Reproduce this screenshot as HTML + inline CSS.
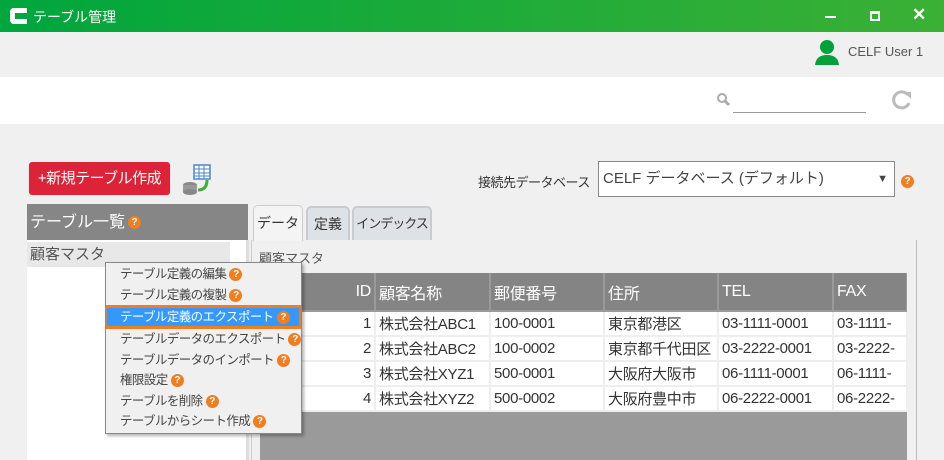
<!DOCTYPE html>
<html><head><meta charset="utf-8"><style>
*{margin:0;padding:0;box-sizing:border-box}
body{width:944px;height:460px;overflow:hidden;background:#f0f0f0;font-family:"Liberation Sans","Noto Sans CJK JP",sans-serif;position:relative;color:#333}
.a{position:absolute;white-space:nowrap}
.q{display:inline-block;width:13px;height:13px;border-radius:50%;background:#f07d1e;color:#fff;font-size:10px;font-weight:bold;text-align:center;line-height:13px;vertical-align:middle;margin-left:3px}
.menu div{height:20.5px;line-height:20px;padding-left:14px;font-size:12.5px;letter-spacing:-0.6px;color:#444;white-space:nowrap}
table{border-collapse:collapse;font-size:15px;letter-spacing:-0.3px}
td,th{height:25px;border-right:2px solid #eee;border-bottom:2px solid #eee;padding:0 3px;white-space:nowrap;overflow:hidden;font-weight:normal;text-align:left;color:#333}
th{height:38px;background:#848484;color:#fff;border-color:#9a9a9a;font-size:16px;vertical-align:middle}
</style></head><body>
<div class="a" style="left:0;top:0;width:944px;height:32px;background:linear-gradient(90deg,#00a63e,#3bb035)"></div>
<div class="a" style="left:10px;top:8px;width:17px;height:16px;border:5px solid #fff;border-right:none;border-radius:4px 0 0 4px"></div>
<div class="a" style="left:33px;top:7px;color:#fff;font-size:14px">テーブル管理</div>
<div class="a" style="left:825px;top:16px;width:11px;height:2px;background:#fff"></div>
<div class="a" style="left:870px;top:11px;width:10px;height:10px;border:2px solid #fff;border-top-width:3px"></div>
<div class="a" style="left:912px;top:5px;color:#fff;font-size:17px;font-weight:bold">✕</div>
<svg class="a" style="left:814px;top:38px" width="26" height="27"><circle cx="13" cy="9" r="7" fill="#04a03c"/><path d="M1 27 Q2 17 13 17 Q24 17 25 27Z" fill="#04a03c"/></svg>
<div class="a" style="left:848px;top:44px;font-size:13px;color:#555">CELF User 1</div>
<div class="a" style="left:0;top:77px;width:944px;height:47px;background:#fff"></div>
<svg class="a" style="left:716px;top:92px" width="16" height="16"><circle cx="6" cy="6" r="4" fill="none" stroke="#aaa" stroke-width="2"/><path d="M9 9l4 4" stroke="#aaa" stroke-width="3"/></svg>
<div class="a" style="left:733px;top:112px;width:133px;height:1px;background:#999"></div>
<svg class="a" style="left:890px;top:88px" width="24" height="24"><path d="M18 7 A8 8 0 1 0 19 15" fill="none" stroke="#bbb" stroke-width="3"/><path d="M14 4 L21 4 L21 11Z" fill="#bbb"/></svg>
<div class="a" style="left:29px;top:162px;width:141px;height:33px;background:#dc2338;border-radius:3px;color:#fff;font-size:15px;letter-spacing:-0.5px;line-height:33px;text-align:center">+新規テーブル作成</div>
<svg class="a" style="left:180px;top:164px" width="32" height="32"><rect x="14" y="1" width="16" height="14" fill="#fff" stroke="#4a86c8" stroke-width="1.5"/><path d="M14 5h16M14 9h16M14 12h16M19 1v14M24 1v14" stroke="#4a86c8"/><ellipse cx="10" cy="21" rx="7" ry="3" fill="#888"/><rect x="3" y="21" width="14" height="7" fill="#999"/><ellipse cx="10" cy="28" rx="7" ry="3" fill="#888"/><path d="M18 26 Q27 26 27 16" fill="none" stroke="#3bb035" stroke-width="3"/></svg>
<div class="a" style="left:478px;top:172px;font-size:13px;letter-spacing:-0.5px">接続先データベース</div>
<div class="a" style="left:598px;top:161px;width:297px;height:36px;background:#fff;border:1px solid #888;font-size:15px;line-height:34px;padding-left:4px;color:#444">CELF データベース (デフォルト)<span style="position:absolute;right:6px;font-size:11px">▼</span></div>
<span class="a q" style="left:898px;top:175px">?</span>
<div class="a" style="left:27px;top:204px;width:221px;height:36px;background:#868686;color:#fff;font-size:16px;line-height:38px;padding-left:3px">テーブル一覧<span class="q">?</span></div>
<div class="a" style="left:27px;top:240px;width:221px;height:220px;background:#fff"></div>
<div class="a" style="left:27px;top:242px;width:203px;height:25px;background:#e8e8e8;font-size:15px;line-height:25px;padding-left:3px;color:#555">顧客マスタ</div>
<div class="a" style="left:246px;top:240px;width:3px;height:220px;background:#ddd"></div>
<div class="a" style="left:253px;top:205px;width:50px;height:36px;background:#f4f4f4;border:1px solid #ccc;border-bottom:none;border-radius:5px 5px 0 0;font-size:14px;line-height:34px;text-align:center">データ</div>
<div class="a" style="left:306px;top:206px;width:44px;height:34px;background:#dde2e6;border:2px solid #c6ccd0;border-bottom:none;border-radius:5px 5px 0 0;font-size:14px;line-height:32px;text-align:center">定義</div>
<div class="a" style="left:352px;top:206px;width:80px;height:34px;background:#dde2e6;border:2px solid #c6ccd0;border-bottom:none;border-radius:5px 5px 0 0;font-size:13px;letter-spacing:-1px;line-height:32px;text-align:center">インデックス</div>
<div class="a" style="left:251px;top:240px;width:666px;height:220px;border-left:1px solid #ccc;border-right:1px solid #bbb"></div>
<div class="a" style="left:259px;top:248px;font-size:13px;color:#555">顧客マスタ</div>
<div class="a" style="left:260px;top:273px;width:647px;height:187px;background:#9a9a9a;overflow:hidden">
<table style="background:#fff;width:647px;table-layout:fixed">
<tr><th style="width:115px;text-align:right">ID</th><th style="width:115px">顧客名称</th><th style="width:114px">郵便番号</th><th style="width:114px">住所</th><th style="width:115px">TEL</th><th style="width:74px">FAX</th></tr>
<tr><td style="text-align:right">1</td><td>株式会社ABC1</td><td>100-0001</td><td>東京都港区</td><td>03-1111-0001</td><td>03-1111-</td></tr>
<tr><td style="text-align:right">2</td><td>株式会社ABC2</td><td>100-0002</td><td>東京都千代田区</td><td>03-2222-0001</td><td>03-2222-</td></tr>
<tr><td style="text-align:right">3</td><td>株式会社XYZ1</td><td>500-0001</td><td>大阪府大阪市</td><td>06-1111-0001</td><td>06-1111-</td></tr>
<tr><td style="text-align:right">4</td><td>株式会社XYZ2</td><td>500-0002</td><td>大阪府豊中市</td><td>06-2222-0001</td><td>06-2222-</td></tr>
</table></div>
<div class="a menu" style="left:105px;top:262px;width:197px;height:172px;background:#f0f0f0;border:1px solid #888;box-shadow:2px 2px 3px rgba(0,0,0,.3);padding-top:1px;overflow:hidden">
<div>テーブル定義の編集<span class="q">?</span></div>
<div>テーブル定義の複製<span class="q">?</span></div>
<div style="background:#3399ff;color:#fff;border:3px solid #f07d1e;margin-left:-2px;margin-right:-1px;padding-left:13px;height:24px;line-height:18px">テーブル定義のエクスポート<span class="q">?</span></div>
<div>テーブルデータのエクスポート<span class="q">?</span></div>
<div>テーブルデータのインポート<span class="q">?</span></div>
<div>権限設定<span class="q">?</span></div>
<div>テーブルを削除<span class="q">?</span></div>
<div>テーブルからシート作成<span class="q">?</span></div>
</div>
</body></html>
